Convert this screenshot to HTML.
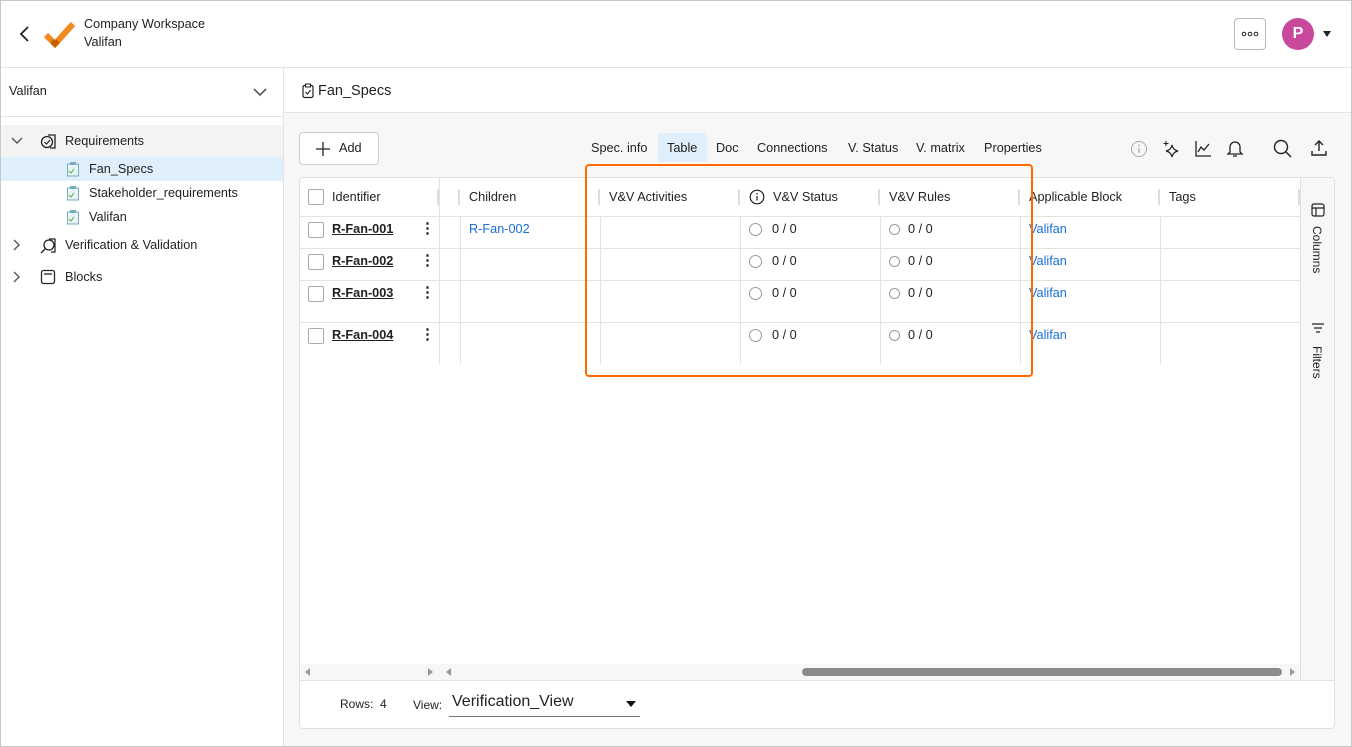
<!DOCTYPE html>
<html><head><meta charset="utf-8"><style>
*{box-sizing:border-box;margin:0;padding:0}
body{width:1352px;height:747px;overflow:hidden;font-family:"Liberation Sans",sans-serif;font-size:12.7px;color:#222;background:#fff;position:relative}
.a{position:absolute}
.frame{left:0;top:0;width:1352px;height:747px;border:1px solid #c8c8c8}
.hl{background:#e3e3e3}
.ck{width:16px;height:16px;border:1px solid #aaa;border-radius:2px;background:#fff}
.id{font-weight:bold;text-decoration:underline;color:#222}
.lnk{color:#1a6fd6}
.rad{width:13px;height:13px;border:1px solid #999;border-radius:50%}
.tab{top:141px;font-size:12.7px;color:#222}
</style></head><body>
<div class="a frame"></div>
<!-- header -->
<svg class="a" style="left:18px;top:25px" width="14" height="18"><path d="M10 2 L3 9 L10 16" stroke="#222" stroke-width="1.8" fill="none"/></svg>
<svg class="a" style="left:44px;top:20px" width="32" height="28"><path d="M2 15 L11 24 L29 4" stroke="#f08a1c" stroke-width="6" fill="none"/><path d="M8 21 L11 24 L14 21" stroke="#c65c00" stroke-width="5" fill="none"/></svg>
<div class="a" style="left:84px;top:17px">Company Workspace</div>
<div class="a" style="left:84px;top:35px">Valifan</div>
<div class="a" style="left:1234px;top:18px;width:32px;height:32px;border:1px solid #bbb;border-radius:4px"></div>
<svg class="a" style="left:1241px;top:31px" width="18" height="6"><circle cx="3" cy="3" r="1.8" stroke="#222" fill="none"/><circle cx="9" cy="3" r="1.8" stroke="#222" fill="none"/><circle cx="15" cy="3" r="1.8" stroke="#222" fill="none"/></svg>
<div class="a" style="left:1282px;top:18px;width:32px;height:32px;border-radius:50%;background:#c8489c;color:#fff;font-weight:bold;font-size:16px;text-align:center;line-height:32px">P</div>
<div class="a" style="left:1323px;top:31px;width:0;height:0;border-left:4px solid transparent;border-right:4px solid transparent;border-top:6px solid #222"></div>
<div class="a hl" style="left:1px;top:67px;width:1350px;height:1px"></div>
<!-- sidebar -->
<div class="a hl" style="left:283px;top:68px;width:1px;height:678px"></div>
<div class="a" style="left:9px;top:84px">Valifan</div>
<svg class="a" style="left:252px;top:87px" width="16" height="10"><path d="M2 2 L8 8 L14 2" stroke="#555" stroke-width="1.6" fill="none"/></svg>
<div class="a hl" style="left:1px;top:116px;width:282px;height:1px"></div>
<div class="a" style="left:1px;top:125px;width:282px;height:32px;background:#f3f3f3"></div>
<div class="a" style="left:1px;top:157px;width:282px;height:24px;background:#dff0fc"></div>
<svg class="a" style="left:11px;top:136px" width="12" height="10"><path d="M1 2 L6 7 L11 2" stroke="#555" stroke-width="1.4" fill="none"/></svg>
<svg class="a" style="left:40px;top:133px" width="18" height="18"><circle cx="7" cy="9" r="5.5" stroke="#222" fill="none" stroke-width="1.3"/><path d="M4.5 9 L6.5 11 L10 7" stroke="#222" fill="none" stroke-width="1.2"/><path d="M8 2 H15 V15 H10" stroke="#222" fill="none" stroke-width="1.3"/></svg>
<div class="a" style="left:65px;top:134px">Requirements</div>
<svg class="a" style="left:66px;top:161px" width="14" height="16"><rect x="1.5" y="3" width="11" height="12" stroke="#7ab" fill="#eaf4f8" stroke-width="1"/><rect x="4" y="1" width="6" height="3" fill="#7ab"/><path d="M3 10 L5 12 L8 8" stroke="#4a4" fill="none"/></svg>
<div class="a" style="left:89px;top:162px">Fan_Specs</div>
<svg class="a" style="left:66px;top:185px" width="14" height="16"><rect x="1.5" y="3" width="11" height="12" stroke="#7ab" fill="#eaf4f8" stroke-width="1"/><rect x="4" y="1" width="6" height="3" fill="#7ab"/><path d="M3 10 L5 12 L8 8" stroke="#4a4" fill="none"/></svg>
<div class="a" style="left:89px;top:186px">Stakeholder_requirements</div>
<svg class="a" style="left:66px;top:209px" width="14" height="16"><rect x="1.5" y="3" width="11" height="12" stroke="#7ab" fill="#eaf4f8" stroke-width="1"/><rect x="4" y="1" width="6" height="3" fill="#7ab"/><path d="M3 10 L5 12 L8 8" stroke="#4a4" fill="none"/></svg>
<div class="a" style="left:89px;top:210px">Valifan</div>
<svg class="a" style="left:12px;top:239px" width="10" height="12"><path d="M2 1 L7 6 L2 11" stroke="#555" stroke-width="1.4" fill="none"/></svg>
<svg class="a" style="left:40px;top:237px" width="18" height="18"><circle cx="9" cy="8" r="5" stroke="#222" fill="none" stroke-width="1.3"/><path d="M5 12 L1 16" stroke="#222" stroke-width="1.3"/><path d="M9 2 H15 V15 H11" stroke="#222" fill="none" stroke-width="1.2"/></svg>
<div class="a" style="left:65px;top:238px">Verification &amp; Validation</div>
<svg class="a" style="left:12px;top:271px" width="10" height="12"><path d="M2 1 L7 6 L2 11" stroke="#555" stroke-width="1.4" fill="none"/></svg>
<svg class="a" style="left:40px;top:269px" width="16" height="16"><rect x="1.5" y="1.5" width="13" height="13" rx="2" stroke="#222" fill="none" stroke-width="1.3"/><path d="M4 5 H12" stroke="#222" stroke-width="1.3"/></svg>
<div class="a" style="left:65px;top:270px">Blocks</div>
<!-- main -->
<svg class="a" style="left:302px;top:83px" width="12" height="16"><rect x="1" y="2.5" width="10" height="12" rx="1.5" stroke="#222" fill="none" stroke-width="1.2"/><rect x="3.5" y="1" width="5" height="3" fill="#fff" stroke="#222"/><path d="M3.5 9 L5.5 11 L8.5 7" stroke="#222" fill="none" stroke-width="1.1"/></svg>
<div class="a" style="left:318px;top:83px;font-size:14.5px">Fan_Specs</div>
<div class="a" style="left:284px;top:112px;width:1067px;height:634px;background:#f7f7f8;border-top:1px solid #e5e5e5"></div>
<div class="a" style="left:299px;top:132px;width:80px;height:33px;border:1px solid #ccc;border-radius:4px;background:#fff"></div>
<svg class="a" style="left:315px;top:141px" width="16" height="16"><path d="M8 1 V15 M1 8 H15" stroke="#222" stroke-width="1.3"/></svg>
<div class="a" style="left:339px;top:141px">Add</div>
<div class="a" style="left:658px;top:133px;width:49px;height:29px;background:#dff0fc"></div>
<div class="a tab" style="left:591px">Spec. info</div>
<div class="a tab" style="left:667px">Table</div>
<div class="a tab" style="left:716px">Doc</div>
<div class="a tab" style="left:757px">Connections</div>
<div class="a tab" style="left:848px">V. Status</div>
<div class="a tab" style="left:916px">V. matrix</div>
<div class="a tab" style="left:984px">Properties</div>
<svg class="a" style="left:1130px;top:140px" width="18" height="18"><circle cx="9" cy="9" r="7.5" stroke="#aaa" fill="none"/><path d="M9 8 V13" stroke="#aaa" stroke-width="1.3"/><circle cx="9" cy="5.5" r=".9" fill="#aaa"/></svg>
<svg class="a" style="left:1162px;top:140px" width="18" height="18"><path d="M10 5 Q11 10 16 11 Q11 12 10 17 Q9 12 4 11 Q9 10 10 5Z" stroke="#222" fill="none" stroke-width="1.2"/><path d="M4 1 V6 M1.5 3.5 H6.5" stroke="#222" stroke-width="1.1"/></svg>
<svg class="a" style="left:1194px;top:140px" width="18" height="18"><path d="M2 1 V16 H17" stroke="#222" fill="none" stroke-width="1.3"/><path d="M4 12 L7 7 L10 10 L15 4" stroke="#222" fill="none" stroke-width="1.3"/></svg>
<svg class="a" style="left:1226px;top:139px" width="18" height="19"><path d="M4 13 V8 A5 5 0 0 1 14 8 V13 L16 15 H2 Z" stroke="#222" fill="none" stroke-width="1.3"/><path d="M7 17 H11" stroke="#222" stroke-width="1.3"/></svg>
<svg class="a" style="left:1273px;top:139px" width="20" height="20"><circle cx="8" cy="8" r="6.5" stroke="#222" fill="none" stroke-width="1.4"/><path d="M13 13 L18 18" stroke="#222" stroke-width="1.5"/></svg>
<svg class="a" style="left:1310px;top:139px" width="18" height="18"><path d="M9 2 V12 M5 6 L9 2 L13 6 M2 12 V16 H16 V12" stroke="#222" fill="none" stroke-width="1.4"/></svg>
<!-- table -->
<div class="a" style="left:299px;top:177px;width:1036px;height:552px;background:#fff;border:1px solid #e0e0e0;border-radius:4px"></div>
<div class="a" style="left:1300px;top:178px;width:34px;height:502px;background:#f7f7f8;border-left:1px solid #e0e0e0"></div>
<div class="a" style="left:300px;top:216px;width:1000px;height:1px;background:#e2e2e2"></div>
<div class="a" style="left:300px;top:248px;width:1000px;height:1px;background:#e2e2e2"></div>
<div class="a" style="left:300px;top:280px;width:1000px;height:1px;background:#e2e2e2"></div>
<div class="a" style="left:300px;top:322px;width:1000px;height:1px;background:#e2e2e2"></div>
<div class="a" style="left:439px;top:178px;width:1px;height:186px;background:#e2e2e2"></div>
<div class="a" style="left:437px;top:189px;width:2px;height:16px;background:#ddd"></div>
<div class="a" style="left:458px;top:189px;width:2px;height:16px;background:#ddd"></div>
<div class="a" style="left:598px;top:189px;width:2px;height:16px;background:#ddd"></div>
<div class="a" style="left:738px;top:189px;width:2px;height:16px;background:#ddd"></div>
<div class="a" style="left:878px;top:189px;width:2px;height:16px;background:#ddd"></div>
<div class="a" style="left:1018px;top:189px;width:2px;height:16px;background:#ddd"></div>
<div class="a" style="left:1158px;top:189px;width:2px;height:16px;background:#ddd"></div>
<div class="a" style="left:1298px;top:189px;width:2px;height:16px;background:#ddd"></div>
<div class="a" style="left:460px;top:217px;width:1px;height:147px;background:#e2e2e2"></div>
<div class="a" style="left:600px;top:217px;width:1px;height:147px;background:#e2e2e2"></div>
<div class="a" style="left:740px;top:217px;width:1px;height:147px;background:#e2e2e2"></div>
<div class="a" style="left:880px;top:217px;width:1px;height:147px;background:#e2e2e2"></div>
<div class="a" style="left:1020px;top:217px;width:1px;height:147px;background:#e2e2e2"></div>
<div class="a" style="left:1160px;top:217px;width:1px;height:147px;background:#e2e2e2"></div>
<div class="a ck" style="left:308px;top:189px"></div>
<div class="a" style="left:332px;top:190px">Identifier</div>
<div class="a" style="left:469px;top:190px">Children</div>
<div class="a" style="left:609px;top:190px">V&amp;V Activities</div>
<svg class="a" style="left:749px;top:189px" width="16" height="16"><circle cx="8" cy="8" r="6.8" stroke="#222" fill="none" stroke-width="1.2"/><path d="M8 7 V11.5" stroke="#222" stroke-width="1.2"/><circle cx="8" cy="4.8" r=".8" fill="#222"/></svg>
<div class="a" style="left:773px;top:190px">V&amp;V Status</div>
<div class="a" style="left:889px;top:190px">V&amp;V Rules</div>
<div class="a" style="left:1029px;top:190px">Applicable Block</div>
<div class="a" style="left:1169px;top:190px">Tags</div>
<div class="a ck" style="left:308px;top:222px"></div><div class="a id" style="left:332px;top:222px">R-Fan-001</div><div class="a" style="left:420px;top:219px;font-weight:bold;font-size:15px">⋮</div>
<div class="a ck" style="left:308px;top:254px"></div><div class="a id" style="left:332px;top:254px">R-Fan-002</div><div class="a" style="left:420px;top:251px;font-weight:bold;font-size:15px">⋮</div>
<div class="a ck" style="left:308px;top:286px"></div><div class="a id" style="left:332px;top:286px">R-Fan-003</div><div class="a" style="left:420px;top:283px;font-weight:bold;font-size:15px">⋮</div>
<div class="a ck" style="left:308px;top:328px"></div><div class="a id" style="left:332px;top:328px">R-Fan-004</div><div class="a" style="left:420px;top:325px;font-weight:bold;font-size:15px">⋮</div>
<div class="a lnk" style="left:469px;top:222px">R-Fan-002</div>
<div class="a rad" style="left:749px;top:223px"></div><div class="a" style="left:772px;top:222px">0 / 0</div>
<div class="a rad" style="left:749px;top:255px"></div><div class="a" style="left:772px;top:254px">0 / 0</div>
<div class="a rad" style="left:749px;top:287px"></div><div class="a" style="left:772px;top:286px">0 / 0</div>
<div class="a rad" style="left:749px;top:329px"></div><div class="a" style="left:772px;top:328px">0 / 0</div>
<div class="a rad" style="left:889px;top:224px;width:11px;height:11px"></div><div class="a" style="left:908px;top:222px">0 / 0</div>
<div class="a rad" style="left:889px;top:256px;width:11px;height:11px"></div><div class="a" style="left:908px;top:254px">0 / 0</div>
<div class="a rad" style="left:889px;top:288px;width:11px;height:11px"></div><div class="a" style="left:908px;top:286px">0 / 0</div>
<div class="a rad" style="left:889px;top:330px;width:11px;height:11px"></div><div class="a" style="left:908px;top:328px">0 / 0</div>
<div class="a lnk" style="left:1029px;top:222px">Valifan</div>
<div class="a lnk" style="left:1029px;top:254px">Valifan</div>
<div class="a lnk" style="left:1029px;top:286px">Valifan</div>
<div class="a lnk" style="left:1029px;top:328px">Valifan</div>
<svg class="a" style="left:1311px;top:203px" width="14" height="14"><rect x="1" y="1" width="12" height="12" rx="2" stroke="#222" fill="none" stroke-width="1.2"/><path d="M1 5 H13 M5 5 V13" stroke="#222" stroke-width="1.2"/></svg>
<div class="a" style="left:1310px;top:226px;writing-mode:vertical-rl;font-size:12px">Columns</div>
<svg class="a" style="left:1311px;top:322px" width="14" height="12"><path d="M1 2 H13 M3 6 H11 M5 10 H9" stroke="#222" stroke-width="1.2"/></svg>
<div class="a" style="left:1310px;top:346px;writing-mode:vertical-rl;font-size:12px">Filters</div>
<div class="a" style="left:300px;top:664px;width:1000px;height:16px;background:#f7f7f7"></div>
<div class="a" style="left:802px;top:668px;width:480px;height:8px;border-radius:4px;background:#8b8b8b"></div>
<div class="a" style="left:305px;top:668px;border-top:4px solid transparent;border-bottom:4px solid transparent;border-right:5px solid #999"></div>
<div class="a" style="left:428px;top:668px;border-top:4px solid transparent;border-bottom:4px solid transparent;border-left:5px solid #999"></div>
<div class="a" style="left:446px;top:668px;border-top:4px solid transparent;border-bottom:4px solid transparent;border-right:5px solid #999"></div>
<div class="a" style="left:1290px;top:668px;border-top:4px solid transparent;border-bottom:4px solid transparent;border-left:5px solid #999"></div>
<div class="a" style="left:300px;top:680px;width:1034px;height:1px;background:#e2e2e2"></div>
<div class="a" style="left:340px;top:697px;font-size:12px">Rows:&nbsp; 4</div>
<div class="a" style="left:413px;top:698px;font-size:12px">View:</div>
<div class="a" style="left:452px;top:693px;font-size:16px">Verification_View</div>
<div class="a" style="left:626px;top:701px;border-left:5px solid transparent;border-right:5px solid transparent;border-top:6px solid #111"></div>
<div class="a" style="left:449px;top:716px;width:191px;height:1px;background:#777"></div>
<div class="a" style="left:585px;top:164px;width:448px;height:213px;border:2.5px solid #ff6a00;border-radius:4px"></div>
</body></html>
